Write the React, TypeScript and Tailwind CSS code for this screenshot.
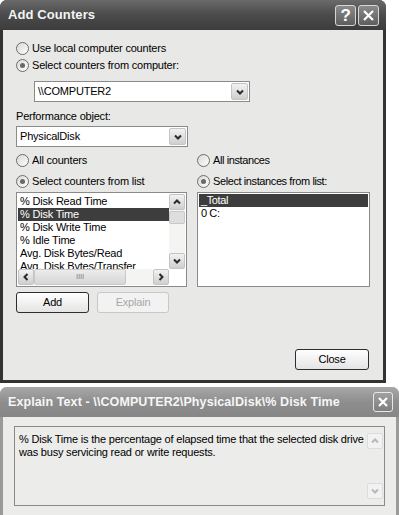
import type { ReactNode } from "react";

const counters = [
  "% Disk Read Time",
  "% Disk Time",
  "% Disk Write Time",
  "% Idle Time",
  "Avg. Disk Bytes/Read",
  "Avg. Disk Bytes/Transfer",
];

function Radio({ checked, label, className = "" }: { checked?: boolean; label: string; className?: string }) {
  return (
    <div className={`flex h-[16px] items-center gap-[3px] ${className}`}>
      <span className="flex h-[13px] w-[13px] items-center justify-center rounded-full border border-[#6d6d6d] bg-gradient-to-br from-[#d8d8d8] to-white">
        {checked ? <span className="h-[5px] w-[5px] rounded-full bg-[#6a6a6a]" /> : null}
      </span>
      <span>{label}</span>
    </div>
  );
}

function Chevron({ dir, faded }: { dir: "up" | "down" | "left" | "right"; faded?: boolean }) {
  const d = {
    up: "M2 6.5 L5 3.5 L8 6.5",
    down: "M2 3.5 L5 6.5 L8 3.5",
    left: "M6.5 2 L3.5 5 L6.5 8",
    right: "M3.5 2 L6.5 5 L3.5 8",
  }[dir];
  return (
    <svg width="10" height="10" viewBox="0 0 10 10">
      <path d={d} fill="none" stroke={faded ? "#b8b8b8" : "#2a2a2a"} strokeWidth="2" />
    </svg>
  );
}

function ArrowBox({ dir, faded, className = "" }: { dir: "up" | "down" | "left" | "right"; faded?: boolean; className?: string }) {
  return (
    <div
      className={`flex h-[16px] w-[16px] shrink-0 items-center justify-center rounded-[2px] border ${
        faded ? "border-[#dcdcdc] bg-[#f2f2f2]" : "border-[#c4c4c4] bg-gradient-to-b from-[#f2f2f2] to-[#cfcfcf]"
      } ${className}`}
    >
      <Chevron dir={dir} faded={faded} />
    </div>
  );
}

function Combo({ value, className = "" }: { value: string; className?: string }) {
  return (
    <div className={`flex h-[21px] items-center border border-[#8a8a8a] bg-white pl-[3px] pr-[1px] ${className}`}>
      <span className="flex-1">{value}</span>
      <ArrowBox dir="down" className="h-[17px] w-[17px]" />
    </div>
  );
}

function Button({ children, disabled, className = "" }: { children: ReactNode; disabled?: boolean; className?: string }) {
  return (
    <div
      className={`flex h-[21px] items-center justify-center rounded-[3px] border ${
        disabled ? "border-[#c8c8c8] bg-[#f2f2f2] text-[#a8a8a8]" : "border-[#2e2e2e] bg-gradient-to-b from-white to-[#e4e4e4]"
      } ${className}`}
    >
      {children}
    </div>
  );
}

function TitleButton({ children }: { children: ReactNode }) {
  return (
    <div className="flex h-[21px] w-[21px] items-center justify-center rounded-[3px] border border-[#d6d6d6] bg-gradient-to-b from-[#8a8a8a] to-[#5e5e5e] text-[17px] font-bold leading-none text-white">
      {children}
    </div>
  );
}

export default function App() {
  return (
    <div className="flex h-[515px] w-[399px] flex-col bg-white font-['Liberation_Sans',Arial,sans-serif] text-[11px] tracking-[-0.2px] text-black">
      {/* Add Counters */}
      <div className="flex h-[383px] w-[386px] flex-col rounded-t-[7px] bg-[#333]">
        <div className="flex h-[30px] items-center rounded-t-[7px] bg-gradient-to-b from-[#6a6a6a] via-[#4b4b4b] to-[#3c3c3c] pl-[8px] pr-[7px]">
          <span className="flex-1 text-[13px] font-bold tracking-[0.1px] text-[#f4f4f4]">Add Counters</span>
          <div className="flex gap-[2px]">
            <TitleButton>?</TitleButton>
            <TitleButton>
              <svg width="13" height="13" viewBox="0 0 13 13">
                <path d="M2 2 L11 11 M11 2 L2 11" stroke="white" strokeWidth="2.2" />
              </svg>
            </TitleButton>
          </div>
        </div>
        <div className="mx-[3px] mb-[3px] flex flex-1 flex-col bg-[#e8e8e6] px-[13px] pt-[10px]">
          <Radio label="Use local computer counters" />
          <Radio label="Select counters from computer:" checked className="mt-[1px]" />
          <Combo value="\\COMPUTER2" className="ml-[18px] mt-[8px] w-[216px]" />
          <div className="mt-[8px] leading-[13px]">Performance object:</div>
          <Combo value="PhysicalDisk" className="mt-[3px] w-[172px]" />
          <div className="mt-[5px] flex gap-[10px]">
            <div className="flex w-[172px] flex-col">
              <Radio label="All counters" />
              <Radio label="Select counters from list" checked className="mt-[5px]" />
              <div className="mt-[3px] flex h-[95px] flex-col border border-[#8a8a8a] bg-white p-[1px]">
                <div className="flex min-h-0 flex-1">
                  <div className="flex-1 overflow-hidden pt-[1px]">
                    {counters.map((c, i) => (
                      <div
                        key={c}
                        className={`h-[13px] whitespace-nowrap pl-[2px] leading-[13px] ${i === 1 ? "bg-[#3d3d3d] text-white" : ""}`}
                      >
                        {c}
                      </div>
                    ))}
                  </div>
                  <div className="flex w-[16px] flex-col bg-[#f4f4f2]">
                    <ArrowBox dir="up" />
                    <div className="mt-[1px] h-[13px] rounded-[2px] border border-[#c8c8c8] bg-[#dedede]" />
                    <div className="flex-1" />
                    <ArrowBox dir="down" />
                  </div>
                </div>
                <div className="flex h-[16px]">
                  <ArrowBox dir="left" />
                  <div className="flex w-[92px] items-center justify-center rounded-[2px] border border-[#c8c8c8] bg-gradient-to-b from-[#ececec] to-[#d6d6d6] text-[8px] leading-none text-[#888]">
                    IIII
                  </div>
                  <div className="flex-1 bg-[#f4f4f2]" />
                  <ArrowBox dir="right" />
                  <div className="w-[16px] bg-white" />
                </div>
              </div>
            </div>
            <div className="flex w-[174px] flex-col tracking-[-0.4px]">
              <Radio label="All instances" />
              <Radio label="Select instances from list:" checked className="mt-[5px]" />
              <div className="mt-[3px] h-[95px] border border-[#8a8a8a] bg-white p-[1px]">
                <div className="h-[13px] bg-[#3d3d3d] pl-[2px] leading-[13px] text-white">_Total</div>
                <div className="h-[13px] pl-[2px] leading-[13px]">0 C:</div>
              </div>
            </div>
          </div>
          <div className="mt-[5px] flex gap-[8px]">
            <Button className="w-[73px]">Add</Button>
            <Button disabled className="w-[72px]">Explain</Button>
          </div>
          <div className="mt-[36px] flex justify-end pr-[1px]">
            <Button className="w-[74px]">Close</Button>
          </div>
        </div>
      </div>

      {/* Explain Text */}
      <div className="mt-[4px] flex flex-1 flex-col rounded-t-[7px] bg-[#9a9a9a]">
        <div className="flex h-[30px] items-center rounded-t-[7px] bg-gradient-to-b from-[#a8a8a8] via-[#8e8e8e] to-[#868686] pl-[8px] pr-[6px]">
          <span className="flex-1 whitespace-nowrap text-[12.5px] font-bold tracking-[0.1px] text-[#f6f6f6]">
            Explain Text - \\COMPUTER2\PhysicalDisk\% Disk Time
          </span>
          <div className="flex h-[20px] w-[20px] items-center justify-center rounded-[3px] border border-[#e8e8e8] bg-gradient-to-b from-[#a0a0a0] to-[#7e7e7e]">
            <svg width="12" height="12" viewBox="0 0 12 12">
              <path d="M2 2 L10 10 M10 2 L2 10" stroke="white" strokeWidth="2.2" />
            </svg>
          </div>
        </div>
        <div className="mx-[3px] flex flex-1 bg-[#ececea] px-[11px] pt-[9px]">
          <div className="flex h-[80px] flex-1 border border-[#8a8a8a] bg-[#ececea] p-[1px]">
            <div className="flex-1 pl-[3px] pt-[5px] leading-[13px]">
              % Disk Time is the percentage of elapsed time that the selected disk drive was busy servicing read or write requests.
            </div>
            <div className="flex w-[16px] flex-col justify-between py-[5px]">
              <ArrowBox dir="up" faded />
              <ArrowBox dir="down" faded />
            </div>
          </div>
        </div>
      </div>
    </div>
  );
}
